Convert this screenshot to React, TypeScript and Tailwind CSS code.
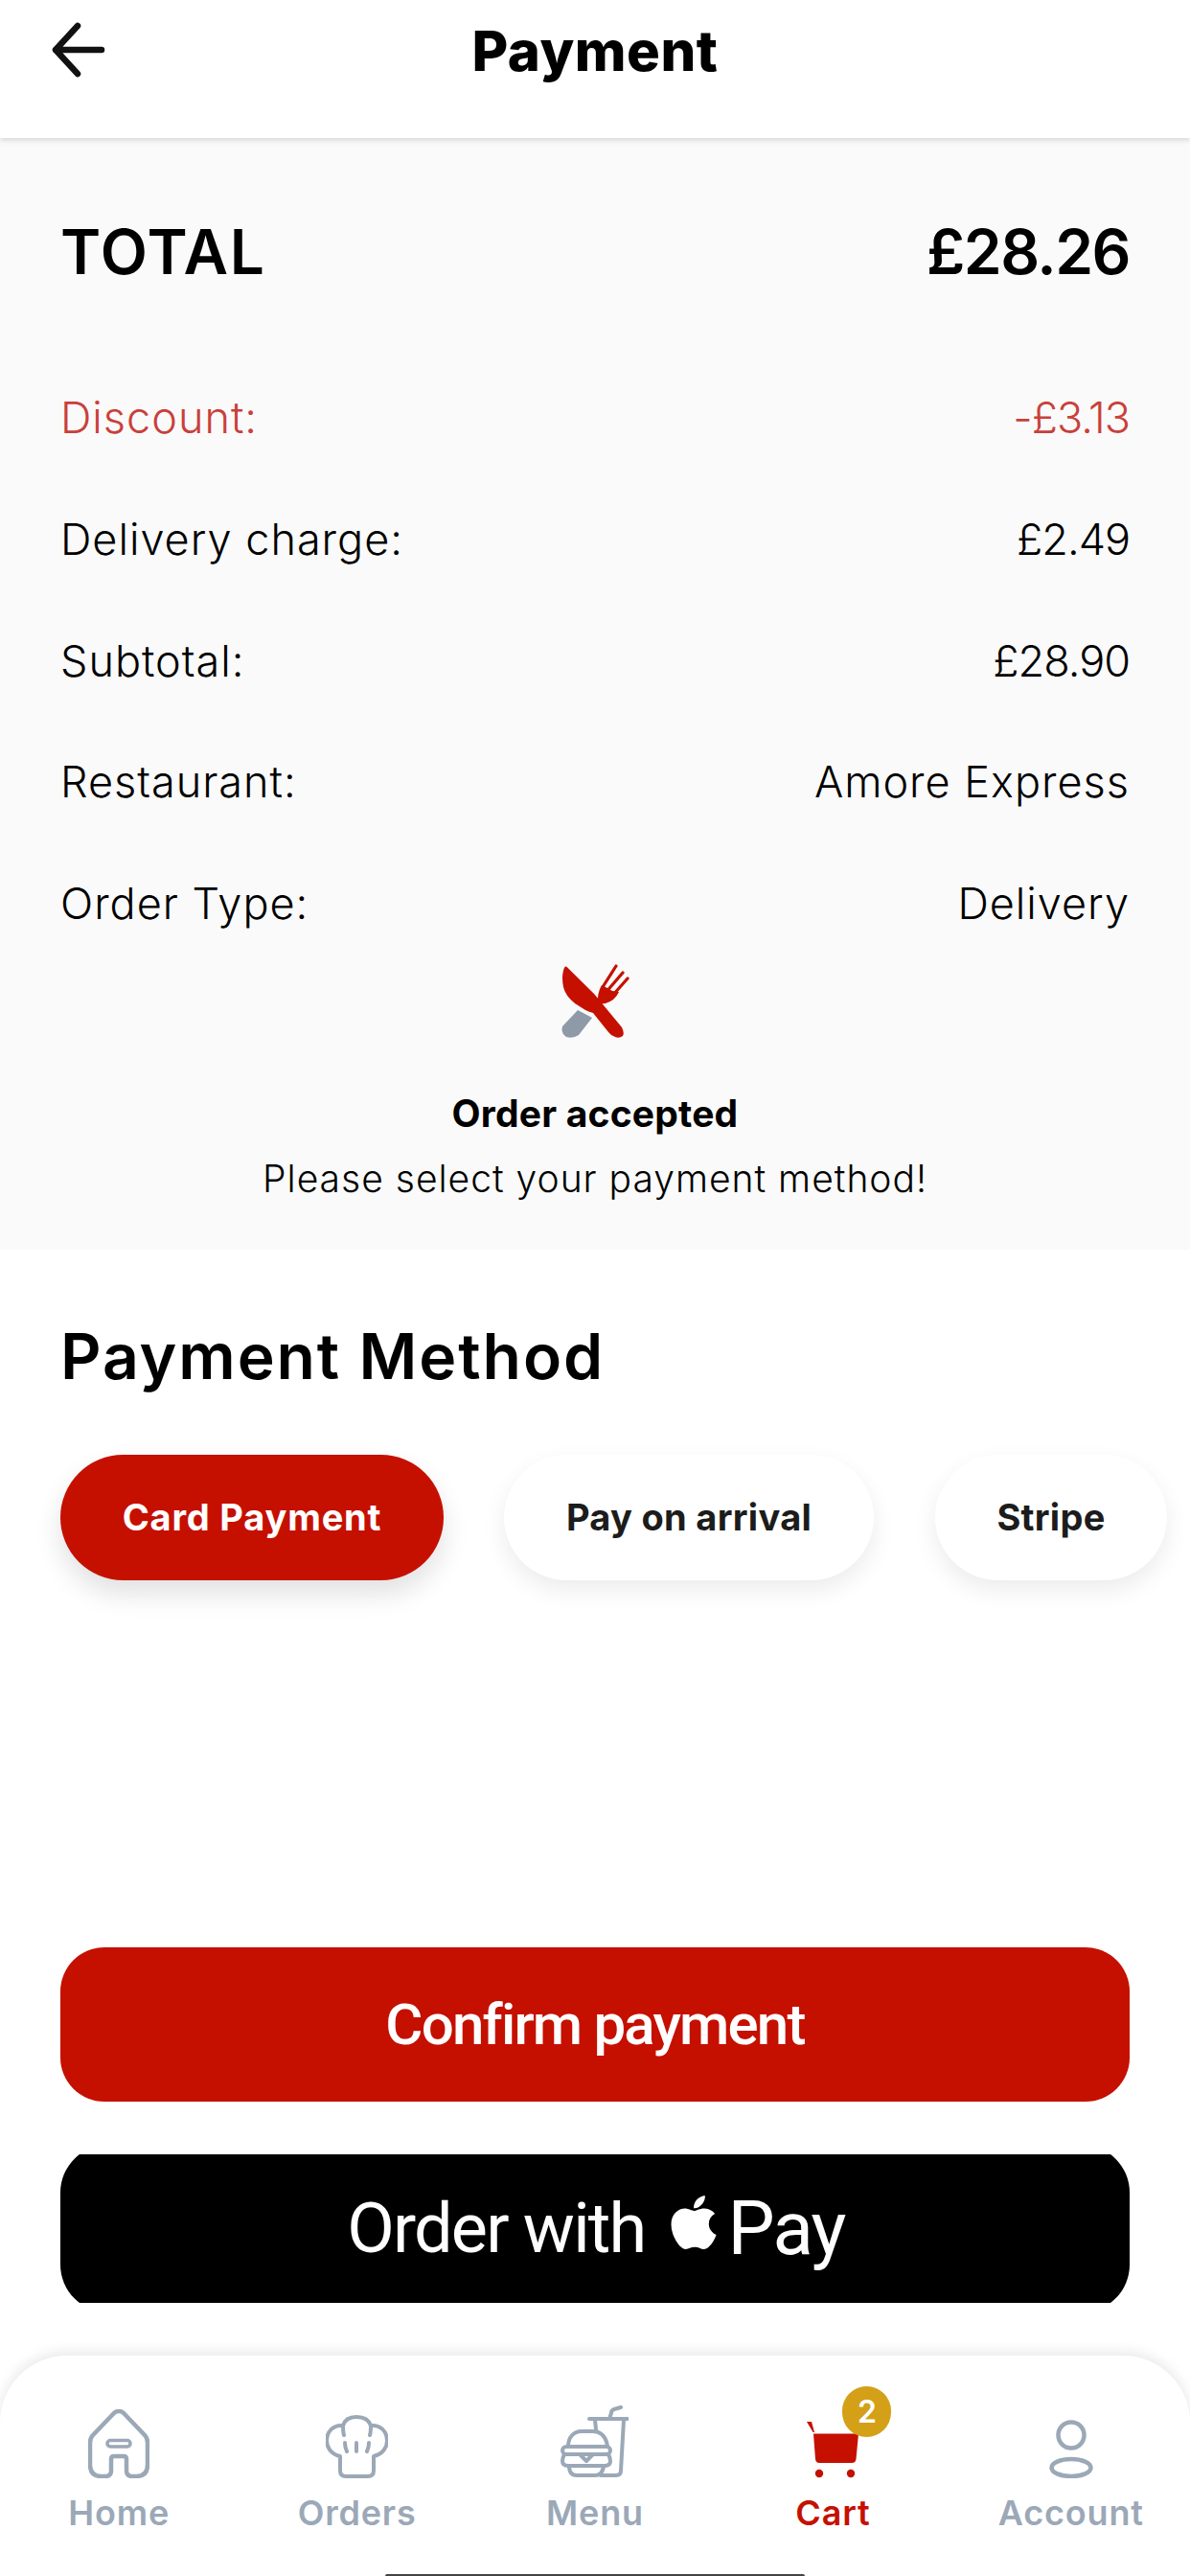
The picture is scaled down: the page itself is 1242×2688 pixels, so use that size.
import { FaApple } from "react-icons/fa";

const rows = [
  { l: "Discount:", v: "-£3.13", red: true, num: true },
  { l: "Delivery charge:", v: "£2.49", num: true },
  { l: "Subtotal:", v: "£28.90", num: true },
  { l: "Restaurant:", v: "Amore Express" },
  { l: "Order Type:", v: "Delivery" },
];

const S = { fill: "none", stroke: "#9ba8b7", strokeWidth: 4.5, strokeLinecap: "round", strokeLinejoin: "round" } as const;

function HomeIcon() {
  return (
    <svg width="64" height="72" viewBox="0 0 64 72" {...S}>
      <path d="M27 4 L5 27 Q2 30 2 35 V58 Q2 70 14 70 H18 Q24 70 24 64 V52 Q24 49 27 49 H37 Q40 49 40 52 V64 Q40 70 46 70 H50 Q62 70 62 58 V35 Q62 30 59 27 L37 4 Q32 0 27 4 Z" />
      <rect x="20" y="32.5" width="24" height="6.5" rx="3.2" strokeWidth="3.5" />
    </svg>
  );
}
function ChefIcon() {
  return (
    <svg width="65" height="66" viewBox="0 0 65 66" {...S}>
      <path d="M15 43 C5 41 1 33 1 27 C1 17 8 10 18 11 C20 4 26 2 32 2 C39 2 45 5 47 11 C57 10 64 17 64 27 C64 34 59 41 50 43 V58 C50 62 48 64 44 64 H21 C17 64 15 62 15 58 Z" strokeWidth="4" />
      <path d="M18 11 C18 14 18 18 19 21 M47 11 C47 14 47 18 46 21 M20 29 C20 33 21 36 22 38 M32 29 V38 M45 29 C45 33 44 36 43 38" strokeWidth="4" />
    </svg>
  );
}
function MenuIcon() {
  return (
    <svg width="71" height="76" viewBox="0 0 71 76" {...S}>
      <path d="M63 2 L56 4 Q53 5 53 8 L51 14 M30 14 H70 M36 15 L37 25 M66 15 L63 68 Q63 73 58 73 H42" strokeWidth="4" />
      <path d="M8 43 C8 33 14 27 22 27 H34 C42 27 48 33 49 43 Z" strokeWidth="4" />
      <rect x="2" y="43" width="50" height="8" rx="4" strokeWidth="4" />
      <path d="M8 51 H4 Q2 55 2 58 Q2 63 8 63 H46 Q52 63 52 58 Q52 55 50 51 H34 L27 58 L20 51 Z" strokeWidth="4" />
      <path d="M9 63 Q9 73 17 73 H36 Q44 73 45 63" strokeWidth="4" />
    </svg>
  );
}
function CartIcon() {
  return (
    <svg width="54" height="59" viewBox="0 0 54 59" fill="#c51000">
      <path d="M0 0 L5 0 L8 11 L6.5 11 Z" />
      <path d="M7 12.5 H54 L51.5 39 Q51 43 47 43 H13 Q9.5 43 9 39 Z" />
      <circle cx="13" cy="54" r="4.2" />
      <circle cx="46" cy="54" r="4.2" />
    </svg>
  );
}
function AccountIcon() {
  return (
    <svg width="46" height="61" viewBox="0 0 46 61" {...S}>
      <ellipse cx="23" cy="16" rx="13.5" ry="13.5" />
      <ellipse cx="23" cy="50" rx="20.5" ry="9" />
    </svg>
  );
}
function CutleryIcon() {
  return (
    <svg width="71" height="77" viewBox="0 0 71 77">
      <path d="M17 48 L32 56 L18 74 Q12 78 5 76 Q-1 72 1 65 Z" fill="#8e9aa8" />
      <path d="M5.4 2.7 L34 31 L63 66 Q66 72 64 75 Q60 78 56 76 Q52 75 49 71 L33 51 Q29 50 25 48 L14 41 Q4 33 2 24 Q0 14 2 7 Q3 2 5.4 2.7 Z" fill="#c51000" />
      <path d="M38 42 Q37 30 42 22 L48 25 L53 28 L60 29 Q56 38 46 41 Z" fill="#c51000" />
      <path d="M43 24 L57 2 M48.5 27 L64 9 M54 32 L69 15" fill="none" stroke="#c51000" strokeWidth="3.2" strokeLinecap="round" />
    </svg>
  );
}

const nav = [
  { l: "Home", i: <HomeIcon /> },
  { l: "Orders", i: <ChefIcon /> },
  { l: "Menu", i: <MenuIcon /> },
  { l: "Cart", i: <CartIcon />, active: true },
  { l: "Account", i: <AccountIcon /> },
];

export default function App() {
  return (
    <div className="relative flex h-[2688px] w-[1242px] flex-col overflow-hidden bg-white font-['Inter',sans-serif] text-black">
      <div className="absolute left-[482px] top-0 h-[2px] w-[280px] rounded-b bg-[#999]" />
      <header className="relative z-10 grid h-[144px] grid-cols-3 items-start bg-white shadow-[0_3px_5px_rgba(0,0,0,0.12)]">
        <svg width="60" height="60" viewBox="0 0 60 60" className="ml-[52px] mt-[22px]" fill="none" stroke="#111" strokeWidth="6.5" strokeLinecap="round" strokeLinejoin="round">
          <path d="M29 5 L6 30 L29 55 M6 30 H54" />
        </svg>
        <h1 className="mt-[23px] whitespace-nowrap text-center text-[58px] font-extrabold leading-[60px] tracking-[0.5px]">Payment</h1>
      </header>

      <section className="flex h-[1160px] flex-col bg-[#fafafa] px-[63px]">
        <div className="mt-[79px] flex items-center justify-between text-[64px] font-semibold leading-[80px]">
          <span className="tracking-[1.5px]">TOTAL</span>
          <span className="tracking-[-1.5px]">£28.26</span>
        </div>
        <div className="mt-[103px] flex flex-col gap-[66.7px]">
          {rows.map((r) => (
            <div key={r.l} className={`flex h-[60px] items-center justify-between text-[45px] font-light tracking-[1px] ${r.red ? "text-[#c9403a]" : "text-black"}`}>
              <span>{r.l}</span>
              <span className={r.num ? "tracking-[-1px]" : ""}>{r.v}</span>
            </div>
          ))}
        </div>
        <div className="mt-[33px] flex flex-col items-center">
          <CutleryIcon />
          <div className="mt-[56px] text-[39px] font-bold leading-[46px] tracking-[0.2px]">Order accepted</div>
          <div className="mt-[22px] text-[39px] font-light leading-[46px] tracking-[1px]">Please select your payment method!</div>
        </div>
      </section>

      <section className="flex flex-col px-[63px]">
        <h2 className="mt-[76px] text-[66px] font-semibold leading-[70px] tracking-[1.9px]">Payment Method</h2>
        <div className="mt-[68px] flex items-center">
          <div className="flex h-[131px] w-[400px] shrink-0 items-center justify-center rounded-full bg-[#c51000] text-[38px] font-bold tracking-[0.8px] text-white shadow-[0_14px_28px_rgba(0,0,0,0.12)]">Card Payment</div>
          <div className="ml-[63px] flex h-[131px] w-[386px] shrink-0 items-center justify-center rounded-full bg-white text-[38px] font-bold tracking-[0.3px] text-[#1c1c1c] shadow-[0_10px_24px_rgba(0,0,0,0.08)]">Pay on arrival</div>
          <div className="ml-[64px] flex h-[131px] w-[242px] shrink-0 items-center justify-center rounded-full bg-white text-[38px] font-bold tracking-[0.3px] text-[#1c1c1c] shadow-[0_10px_24px_rgba(0,0,0,0.08)]">Stripe</div>
        </div>
        <div className="mt-[383px] flex h-[161px] items-center justify-center rounded-[46px] bg-[#c51000] font-['Roboto',sans-serif] text-[60px] font-medium tracking-[-1.8px] text-white">Confirm payment</div>
        <div className="mt-[55px] h-[155px] overflow-hidden">
          <div className="-mt-[10px] flex h-[175px] items-center justify-center gap-[26px] rounded-[50px] bg-black pl-[2px] font-['Roboto',sans-serif] text-[72px] font-normal tracking-[-1.8px] text-white">
            <span>Order with</span>
            <span className="flex items-center gap-[10px]">
              <FaApple className="-mt-[14px] h-[64px] w-[50px]" />
              <span className="text-[78px]">Pay</span>
            </span>
          </div>
        </div>
      </section>

      <nav className="absolute bottom-0 left-0 right-0 flex h-[230px] flex-col rounded-t-[70px] bg-white shadow-[0_-4px_14px_rgba(0,0,0,0.09)]">
        <div className="grid flex-1 grid-cols-5">
          {nav.map((n) => (
            <div key={n.l} className="flex flex-col items-center">
              <div className="relative mt-[50px] flex h-[80px] items-end justify-center pb-[2px]">
                {n.i}
                {n.active && (
                  <span className="absolute left-[37px] top-[-18px] flex h-[53px] w-[51px] items-center justify-center rounded-full bg-[#d4a017] text-[32px] font-semibold text-white">2</span>
                )}
              </div>
              <span className={`mt-[12px] text-[36px] font-semibold leading-[44px] tracking-[0.8px] ${n.active ? "text-[#c51000]" : "text-[#9ba8b7]"}`}>{n.l}</span>
            </div>
          ))}
        </div>
        <div className="mx-auto h-[2px] w-[438px] rounded-t bg-[#444]" />
      </nav>
    </div>
  );
}
